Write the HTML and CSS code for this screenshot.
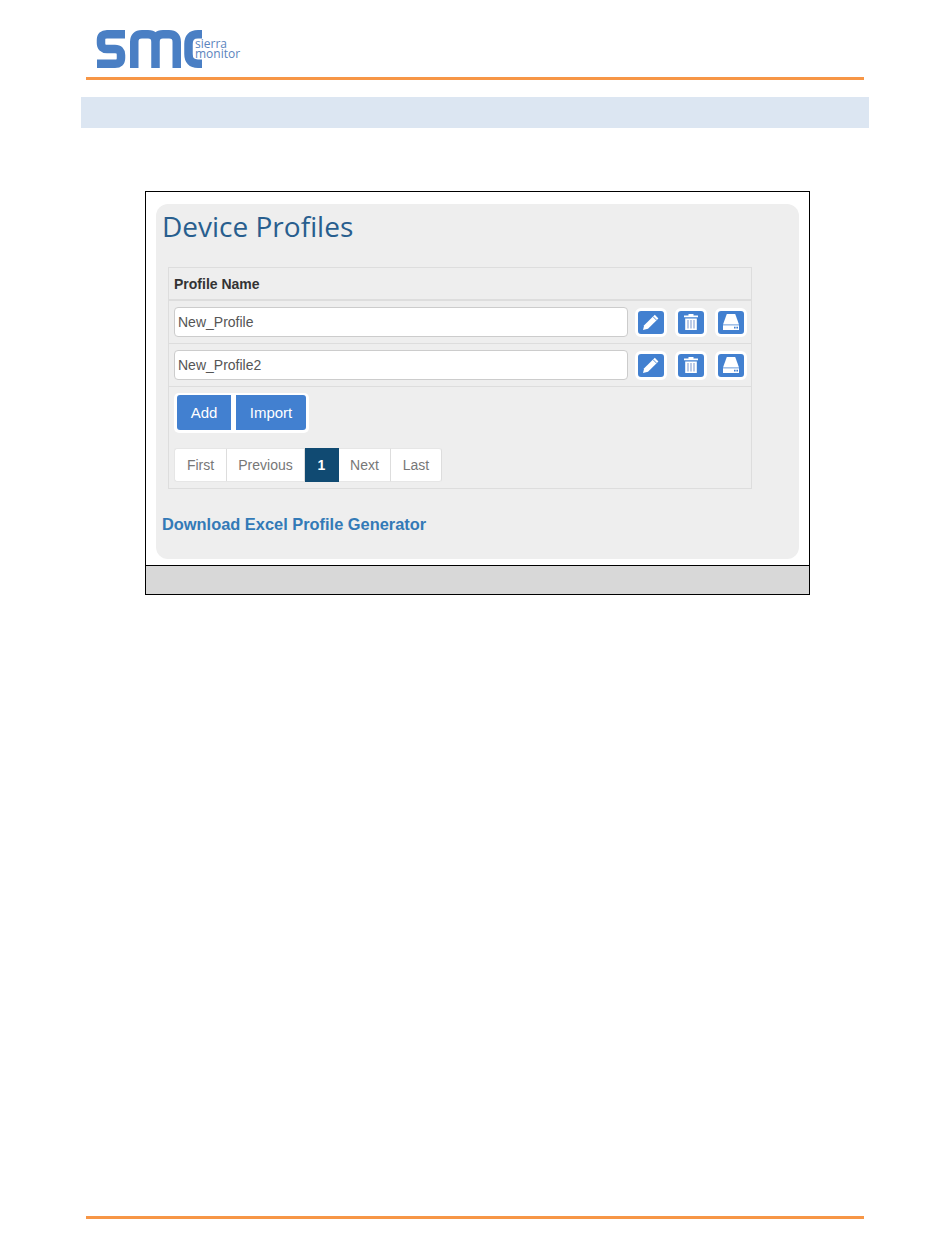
FILE: index.html
```html
<!DOCTYPE html>
<html lang="en">
<head>
<meta charset="utf-8">
<title>Device Profiles</title>
<link rel="stylesheet" href="styles.css">
</head>
<body>
<div class="page">
  <header class="head">
    <div class="logo">
      <svg class="logo-mark" viewBox="0 0 107 38" width="107" height="38" aria-hidden="true">
        <g fill="none" stroke="#4a7fc4" stroke-width="8.500">
          <path d="M29 4.250H11Q5 4.250 5 10V13Q5 19 11 19H19Q25 19 25 25V28Q25 33.750 19 33.750H1"/>
          <path d="M38.250 38V12Q38.250 4.250 46 4.250H52Q59.500 4.250 59.500 12V38M59.500 12Q59.500 4.250 67 4.250H73Q80.750 4.250 80.750 12V38"/>
          <path d="M106 4.250H102Q92.500 4.250 92.500 14V24Q92.500 33.750 102 33.750H106"/>
        </g>
      </svg>
      <div class="logo-text"><span>sierra</span><span>monitor</span></div>
    </div>
  </header>
  <div class="rule"></div>
  <div class="band"></div>
  <section class="frame">
    <div class="frame-body">
      <div class="panel">
        <h1 class="title">Device Profiles</h1>
        <div class="table">
          <div class="thead">Profile Name</div>
          <div class="row">
            <div class="field">New_Profile</div>
            <span class="ibtn"><svg viewBox="0 0 20 20" width="20" height="20"><path d="M2 18l1.200-4.800L13.800 2.800l3.600 3.600L7 16.800z" fill="#fff"/><path d="M12 4.600l3.600 3.600" stroke="#4280d0" stroke-width=".9"/></svg></span>
            <span class="ibtn"><svg viewBox="0 0 20 20" width="20" height="20"><path d="M3 3.600h4.500V2h5v1.600H17v1.700H3z" fill="#fff"/><path d="M4.200 6.500h11.600V18H4.200z" fill="#fff"/><path d="M7 8v8.500M10 8v8.500M13 8v8.500" stroke="#8fa8d8" stroke-width="1.200"/></svg></span>
            <span class="ibtn"><svg viewBox="0 0 20 20" width="20" height="20"><path d="M5.800 2h8.400L18 12.500H2z" fill="#fff"/><path d="M2 13.300h16V18H2z" fill="#fff"/><path d="M13 14.800h1.600v1.600H13zM15.400 14.800H17v1.600h-1.600z" fill="#4280d0"/></svg></span>
          </div>
          <div class="row">
            <div class="field">New_Profile2</div>
            <span class="ibtn"><svg viewBox="0 0 20 20" width="20" height="20"><path d="M2 18l1.200-4.800L13.800 2.800l3.600 3.600L7 16.800z" fill="#fff"/><path d="M12 4.600l3.600 3.600" stroke="#4280d0" stroke-width=".9"/></svg></span>
            <span class="ibtn"><svg viewBox="0 0 20 20" width="20" height="20"><path d="M3 3.600h4.500V2h5v1.600H17v1.700H3z" fill="#fff"/><path d="M4.200 6.500h11.600V18H4.200z" fill="#fff"/><path d="M7 8v8.500M10 8v8.500M13 8v8.500" stroke="#8fa8d8" stroke-width="1.200"/></svg></span>
            <span class="ibtn"><svg viewBox="0 0 20 20" width="20" height="20"><path d="M5.800 2h8.400L18 12.500H2z" fill="#fff"/><path d="M2 13.300h16V18H2z" fill="#fff"/><path d="M13 14.800h1.600v1.600H13zM15.400 14.800H17v1.600h-1.600z" fill="#4280d0"/></svg></span>
          </div>
          <div class="actions">
            <div class="btn-group"><span class="btn btn-add">Add</span><span class="btn btn-import">Import</span></div>
          </div>
          <nav class="pager">
            <span class="pg pg-first">First</span><span class="pg pg-prev">Previous</span><span class="pg pg-cur">1</span><span class="pg pg-next">Next</span><span class="pg pg-last">Last</span>
          </nav>
        </div>
        <a class="dl">Download Excel Profile Generator</a>
      </div>
    </div>
    <div class="caption"></div>
  </section>
  <div class="spacer"></div>
  <div class="rule"></div>
</div>
</body>
</html>
```
FILE: styles.css
```css
html, body { margin: 0; padding: 0; background: #fff; }
body { font-family: "Liberation Sans", Arial, sans-serif; }
.page { width: 950px; height: 1248px; display: flex; flex-direction: column; box-sizing: border-box; padding-top: 30px; }
.head { height: 47px; padding-left: 96px; box-sizing: border-box; flex: none; }
.logo { display: flex; align-items: flex-start; }
.logo-mark { display: block; flex: none; }
.logo-text { display: flex; flex-direction: column; margin: 9px 0 0 -8px; font-family: "Open Sans", sans-serif; font-size: 12px; line-height: 9.500px; color: #5b84bd; }
.rule { height: 3px; margin: 0 86px; background: #f79646; flex: none; }
.band { height: 31px; margin: 17px 81px 0; background: #dce6f2; flex: none; }
.frame { margin: 63px 140px 0 145px; border: 1px solid #000; height: 404px; box-sizing: border-box; display: flex; flex-direction: column; flex: none; }
.frame-body { height: 373px; padding: 12px 10px 0; box-sizing: border-box; }
.panel { height: 355px; background: #eee; border-radius: 12px; padding: 0 6px; box-sizing: border-box; }
.title { margin: 0; padding-top: 6px; font-family: "Open Sans", sans-serif; font-weight: 400; font-size: 28px; line-height: 32px; color: #285e8e; }
.table { width: 584px; height: 222px; margin: 25px 0 0 6px; border: 1px solid #ddd; box-sizing: border-box; }
.thead { height: 31px; padding-left: 5px; border-bottom: 2px solid #ddd; font-weight: 700; font-size: 14px; line-height: 32px; color: #333; }
.row { height: 43px; display: flex; align-items: center; padding-left: 5px; border-bottom: 1px solid #ddd; box-sizing: border-box; }
.field { flex: none; width: 454px; height: 30px; background: #fff; border: 1px solid #ccc; border-radius: 4px; box-sizing: border-box; padding-left: 3px; font-size: 14px; line-height: 28px; color: #555; margin-right: 7px; }
.ibtn { flex: none; width: 32px; height: 29px; background: #4280d0; border: 3px solid #fff; border-radius: 6px; box-sizing: border-box; display: flex; align-items: center; justify-content: center; margin-right: 8px; }
.ibtn svg { display: block; }
.actions { padding: 6px 0 0 5px; height: 53px; box-sizing: border-box; }
.btn-group { display: inline-flex; background: #fff; border-radius: 5px; padding: 2px 3px 3px; gap: 5px; }
.btn { height: 35px; background: #4280d0; color: #fff; font-size: 15px; line-height: 35px; text-align: center; display: block; }
.btn-add { width: 54px; border-radius: 3px 0 0 3px; }
.btn-import { width: 70px; border-radius: 0 3px 3px 0; }
.pager { display: flex; margin: 8px 0 0 5px; height: 34px; }
.pg { height: 34px; box-sizing: border-box; background: #fff; border: 1px solid #e6e6e6; border-left: 0; border-right-color: #ddd; color: #777; font-size: 14px; line-height: 33px; text-align: center; }
.pg-first { width: 53px; border-left: 1px solid #e6e6e6; border-radius: 3px 0 0 3px; }
.pg-prev { width: 78px; }
.pg-cur { width: 34px; background: #104a72; border-color: #104a72; color: #fff; font-weight: 700; }
.pg-next { width: 52px; }
.pg-last { width: 51px; border-radius: 0 3px 3px 0; }
.dl { display: block; margin: 25px 0 0 0; font-weight: 700; font-size: 16.400px; line-height: 20px; color: #337ab7; }
.caption { height: 29px; background: #d8d8d8; border-top: 1px solid #000; box-sizing: border-box; }
.spacer { flex: none; height: 621px; }
```
